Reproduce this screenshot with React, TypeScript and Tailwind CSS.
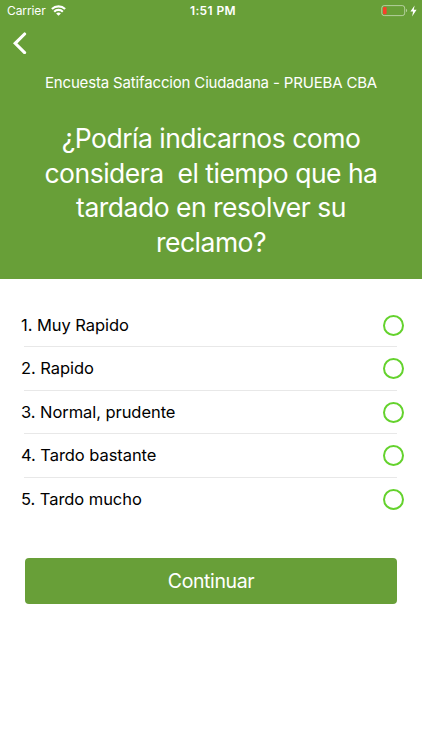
import clsx from "clsx";

interface Option {
    id: number;
    label: string;
}

const options: Option[] = [
    { id: 1, label: "Muy Rapido" },
    { id: 2, label: "Rapido" },
    { id: 3, label: "Normal, prudente" },
    { id: 4, label: "Tardo bastante" },
    { id: 5, label: "Tardo mucho" },
];

const titleLines = [
    "¿Podría indicarnos como",
    "considera  el tiempo que ha",
    "tardado en resolver su",
    "reclamo?",
];

function WifiIcon() {
    return (
        <svg
            className="mb-px"
            width="15"
            height="11"
            viewBox="0 0 15 11"
            fill="none"
        >
            <path
                d="M0.9 4.1a9.3 9.3 0 0 1 13.2 0M3.2 6.7a6 6 0 0 1 8.6 0"
                stroke="#fff"
                strokeWidth="2.1"
            />
            <path d="M7.5 10.8 5.1 8.6a3.4 3.4 0 0 1 4.8 0z" fill="#fff" />
        </svg>
    );
}

function BatteryIcon() {
    return (
        <svg width="38" height="12" viewBox="0 0 38 12" fill="none">
            <rect
                x="0.8"
                y="0.6"
                width="22.9"
                height="10"
                rx="2.4"
                stroke="#fff"
                strokeOpacity="0.5"
            />
            <rect x="2" y="1.9" width="3.6" height="7.4" rx="1" fill="#f8402b" />
            <path d="M25 3.8c1.5.5 1.5 3 0 3.5z" fill="#fff" fillOpacity="0.5" />
            <path d="M33.6 0.4 29.4 6.6h2.7l-1 4.8 4.5-6.6h-2.8z" fill="#fff" />
        </svg>
    );
}

function StatusBar() {
    return (
        <div className="grid h-[22px] grid-cols-3 items-center pl-[7px] pr-[3px] text-[12px] leading-[22px]">
            <div className="flex items-center gap-[5px]">
                <span className="tracking-[-0.1px]">Carrier</span>
                <WifiIcon />
            </div>
            <span className="text-center font-semibold tracking-[0.4px] whitespace-nowrap">
                1:51 PM
            </span>
            <div className="flex justify-end">
                <BatteryIcon />
            </div>
        </div>
    );
}

function Header() {
    return (
        <header className="h-[279px] bg-[#689f38] text-white">
            <StatusBar />
            <button className="block pt-[10px] pl-[12px]" aria-label="Volver">
                <svg width="16" height="22" viewBox="0 0 16 22" fill="none">
                    <path
                        d="M12.6 2 3.2 11.3l9.4 9.3"
                        stroke="#fff"
                        strokeWidth="3.1"
                        strokeLinecap="round"
                    />
                </svg>
            </button>
            <p className="mt-[18px] text-center text-[15px] leading-[22px] tracking-[-0.16px]">
                Encuesta Satifaccion Ciudadana - PRUEBA CBA
            </p>
            <h1 className="mt-[27px] text-center text-[26.5px] leading-[34.5px] font-normal tracking-[-0.5px] whitespace-pre">
                {titleLines.map((line) => (
                    <span key={line} className="block">
                        {line}
                    </span>
                ))}
            </h1>
        </header>
    );
}

export default function App() {
    return (
        <div className="min-h-[750px] w-full bg-white font-['Inter',sans-serif]">
            <Header />
            <ul className="pt-[24.5px]">
                {options.map((option, index) => (
                    <li key={option.id}>
                        <div className="flex h-[42.5px] items-center justify-between pr-[18.5px] pl-[21px]">
                            <span className="pt-px text-[16.5px] tracking-[-0.06px] text-black">
                                {option.id}. {option.label}
                            </span>
                            <span className="mt-px size-[21px] rounded-full border-2 border-[#64d22d]" />
                        </div>
                        <div
                            className={clsx(
                                "mr-[25px] ml-[24px] h-px",
                                index < options.length - 1 && "bg-[#e8e8e8]"
                            )}
                        />
                    </li>
                ))}
            </ul>
            <button className="mx-[25px] mt-[37px] block h-[46px] w-[372px] rounded-[4px] bg-[#689f38] pt-[2px] text-center text-[19.5px] tracking-[-0.4px] text-white">
                Continuar
            </button>
        </div>
    );
}
